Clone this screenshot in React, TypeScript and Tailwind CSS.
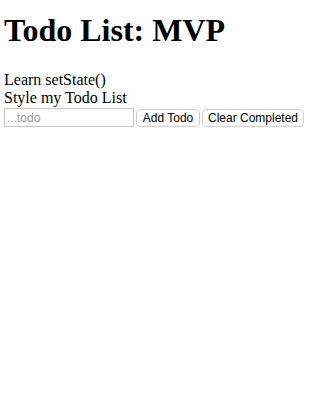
import { useState } from "react";

const initialTodos = [
  { id: 1, task: "Learn setState()", completed: false },
  { id: 2, task: "Style my Todo List", completed: false },
];

export default function App() {
  const [todos] = useState(initialTodos);
  return (
    <div className="px-1 font-['Liberation_Serif',serif] text-black bg-white min-h-screen">
      <h1 className="text-[32px] font-bold leading-[37px] pt-[12px] mb-[22px]">Todo List: MVP</h1>
      <div className="text-[16px] leading-[18px]">
        {todos.map((todo) => (
          <div key={todo.id}>{todo.task}</div>
        ))}
      </div>
      <form className="flex items-center gap-[2px] mt-[1px] font-['Liberation_Sans',Arial,sans-serif] text-[12px]">
        <input
          type="text"
          placeholder="...todo"
          className="w-[130px] h-[19px] px-[2px] border border-[#c8c8c8] placeholder:text-[#9a9a9a] text-[12px] outline-none"
        />
        <button type="button" className="w-[64px] h-[18px] rounded-[4px] border border-[#d0d0d0] bg-white leading-none">
          Add Todo
        </button>
        <button type="button" className="w-[102px] h-[18px] rounded-[4px] border border-[#d0d0d0] bg-white leading-none">
          Clear Completed
        </button>
      </form>
    </div>
  );
}
